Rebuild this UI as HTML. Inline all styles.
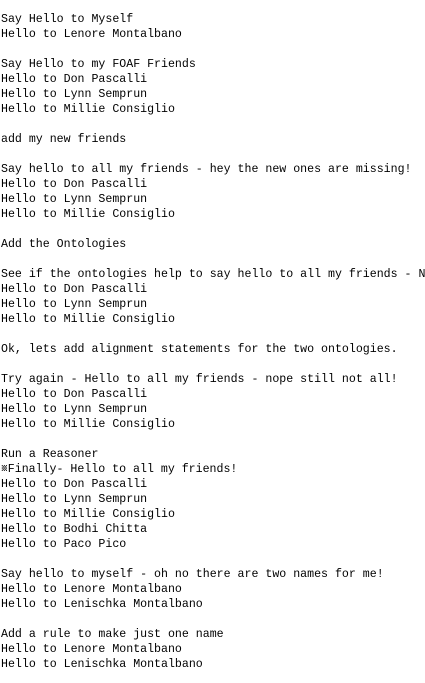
<!DOCTYPE html>
<html><head><meta charset="utf-8"><style>
html,body{margin:0;padding:0;background:#fff;width:425px;height:683px;overflow:hidden}
pre{margin:0;padding:12px 0 0 1px;font-family:"Liberation Mono",monospace;font-size:11.6px;line-height:15px;color:#000;white-space:pre}
</style></head><body><pre>Say Hello to Myself
Hello to Lenore Montalbano

Say Hello to my FOAF Friends
Hello to Don Pascalli
Hello to Lynn Semprun
Hello to Millie Consiglio

add my new friends

Say hello to all my friends - hey the new ones are missing!
Hello to Don Pascalli
Hello to Lynn Semprun
Hello to Millie Consiglio

Add the Ontologies

See if the ontologies help to say hello to all my friends - N
Hello to Don Pascalli
Hello to Lynn Semprun
Hello to Millie Consiglio

Ok, lets add alignment statements for the two ontologies.

Try again - Hello to all my friends - nope still not all!
Hello to Don Pascalli
Hello to Lynn Semprun
Hello to Millie Consiglio

Run a Reasoner
&#x2427;Finally- Hello to all my friends!
Hello to Don Pascalli
Hello to Lynn Semprun
Hello to Millie Consiglio
Hello to Bodhi Chitta
Hello to Paco Pico

Say hello to myself - oh no there are two names for me!
Hello to Lenore Montalbano
Hello to Lenischka Montalbano

Add a rule to make just one name
Hello to Lenore Montalbano
Hello to Lenischka Montalbano</pre></body></html>
